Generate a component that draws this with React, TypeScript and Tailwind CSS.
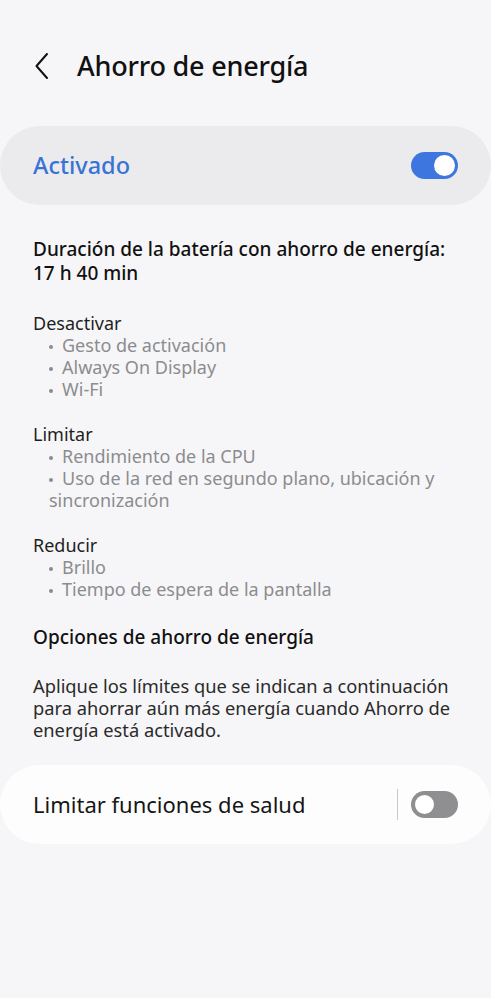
import React from "react";

const font = { fontFamily: '"Noto Sans", "Open Sans", sans-serif' };

function Toggle({ on }: { on: boolean }) {
  if (on) {
    return (
      <div className="flex h-[27px] w-[47px] items-center justify-end rounded-full bg-[#3e76e0] pr-[3px]">
        <div className="h-[21px] w-[21px] rounded-full bg-white" />
      </div>
    );
  }
  return (
    <div className="flex h-[27px] w-[47px] items-center rounded-full bg-[#8f8f91] pl-[2px]">
      <div className="h-[23px] w-[23px] rounded-full border-[2px] border-[#8f8f91] bg-white" />
    </div>
  );
}

function Group({ title, items }: { title: string; items: string[] }) {
  return (
    <div className="text-[18px] leading-[22px]">
      <div className="text-[#1e1e1e]">{title}</div>
      <ul className="pl-[16px] text-[#8c8c8e]">
        {items.map((it) => (
          <li key={it}>
            <span className="mr-[9px] inline-block h-[4px] w-[4px] rounded-full bg-[#8c8c8e] align-middle" />
            {it}
          </li>
        ))}
      </ul>
    </div>
  );
}

export default function App() {
  return (
    <main style={font} className="min-h-[998px] w-full bg-[#f6f6f8] text-[#111]">
      <header className="flex h-[112px] items-start pt-[46px]">
        <div className="flex h-[40px] items-center pl-[34px]">
          <svg width="16" height="28" viewBox="0 0 16 28" fill="none">
            <path d="M13 2 L2.5 14 L13 26" stroke="#111" strokeWidth="2" strokeLinecap="round" strokeLinejoin="round" />
          </svg>
        </div>
        <h1 className="ml-[27px] h-[40px] text-[27px] font-medium leading-[40px] tracking-[-0.2px]">
          Ahorro de energía
        </h1>
      </header>

      <div className="mt-[14px] flex h-[79px] items-center justify-between rounded-[40px] bg-[#ebebed] pl-[33px] pr-[33px]">
        <span className="text-[23.5px] font-medium text-[#3a73d6]">Activado</span>
        <Toggle on />
      </div>

      <section className="px-[33px] pt-[32px]">
        <p className="text-[19px] font-medium leading-[24px]">
          Duración de la batería con ahorro de energía:
          <br />
          17 h 40 min
        </p>

        <div className="mt-[27px] flex flex-col gap-[23px]">
          <Group title="Desactivar" items={["Gesto de activación", "Always On Display", "Wi-Fi"]} />
          <Group
            title="Limitar"
            items={["Rendimiento de la CPU", "Uso de la red en segundo plano, ubicación y sincronización"]}
          />
          <Group title="Reducir" items={["Brillo", "Tiempo de espera de la pantalla"]} />
        </div>

        <h2 className="mt-[25px] text-[19px] font-medium leading-[24px]">Opciones de ahorro de energía</h2>
        <p className="mt-[26px] text-[18.3px] leading-[22px] text-[#2a2a2a]">
          Aplique los límites que se indican a continuación para ahorrar aún más energía cuando Ahorro de energía
          está activado.
        </p>
      </section>

      <div className="mt-[24px] flex h-[79px] items-center justify-between rounded-[40px] bg-[#fdfdfd] pl-[33px] pr-[33px]">
        <span className="text-[22px] text-[#161616]">Limitar funciones de salud</span>
        <div className="flex items-center gap-[13px]">
          <div className="h-[31px] w-px bg-[#c8c8ca]" />
          <Toggle on={false} />
        </div>
      </div>
    </main>
  );
}
